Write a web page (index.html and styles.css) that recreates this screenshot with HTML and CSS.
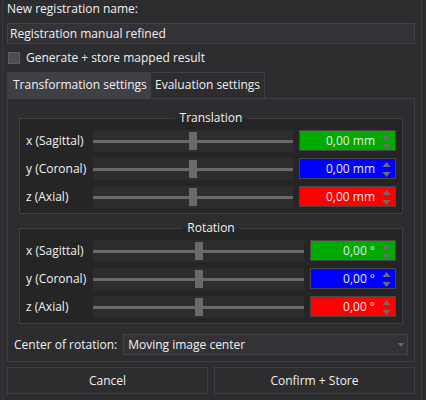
FILE: index.html
```html
<!DOCTYPE html>
<html>
<head>
<meta charset="utf-8">
<link rel="stylesheet" href="styles.css">
</head>
<body>
<div class="window">
  <div class="main">
    <div class="caption">New registration name:</div>
    <div class="lineedit">Registration manual refined</div>
    <div class="check"><span class="box"></span><span>Generate + store mapped result</span></div>
    <div class="tabs">
      <div class="tab active">Transformation settings</div>
      <div class="tab">Evaluation settings</div>
    </div>
    <div class="pane">
      <fieldset class="group trans">
        <legend>Translation</legend>
        <div class="row">
          <span class="lbl">x (Sagittal)</span>
          <div class="slider"><span class="handle"></span></div>
          <div class="spin green"><span class="val">0,00 mm</span><svg class="arrows" width="9" height="16" viewBox="0 0 9 16"><path d="M4.5 1 L8.5 6 L0.5 6 Z M0.5 11 L8.5 11 L4.5 16 Z" fill="#6c6c6c"/></svg></div>
        </div>
        <div class="row">
          <span class="lbl">y (Coronal)</span>
          <div class="slider"><span class="handle"></span></div>
          <div class="spin blue"><span class="val">0,00 mm</span><svg class="arrows" width="9" height="16" viewBox="0 0 9 16"><path d="M4.5 1 L8.5 6 L0.5 6 Z M0.5 11 L8.5 11 L4.5 16 Z" fill="#6c6c6c"/></svg></div>
        </div>
        <div class="row">
          <span class="lbl">z (Axial)</span>
          <div class="slider"><span class="handle"></span></div>
          <div class="spin red"><span class="val">0,00 mm</span><svg class="arrows" width="9" height="16" viewBox="0 0 9 16"><path d="M4.5 1 L8.5 6 L0.5 6 Z M0.5 11 L8.5 11 L4.5 16 Z" fill="#6c6c6c"/></svg></div>
        </div>
      </fieldset>
      <fieldset class="group rot">
        <legend>Rotation</legend>
        <div class="row">
          <span class="lbl">x (Sagittal)</span>
          <div class="slider"><span class="handle"></span></div>
          <div class="spin green"><span class="val">0,00 °</span><svg class="arrows" width="9" height="16" viewBox="0 0 9 16"><path d="M4.5 1 L8.5 6 L0.5 6 Z M0.5 11 L8.5 11 L4.5 16 Z" fill="#6c6c6c"/></svg></div>
        </div>
        <div class="row">
          <span class="lbl">y (Coronal)</span>
          <div class="slider"><span class="handle"></span></div>
          <div class="spin blue"><span class="val">0,00 °</span><svg class="arrows" width="9" height="16" viewBox="0 0 9 16"><path d="M4.5 1 L8.5 6 L0.5 6 Z M0.5 11 L8.5 11 L4.5 16 Z" fill="#6c6c6c"/></svg></div>
        </div>
        <div class="row">
          <span class="lbl">z (Axial)</span>
          <div class="slider"><span class="handle"></span></div>
          <div class="spin red"><span class="val">0,00 °</span><svg class="arrows" width="9" height="16" viewBox="0 0 9 16"><path d="M4.5 1 L8.5 6 L0.5 6 Z M0.5 11 L8.5 11 L4.5 16 Z" fill="#6c6c6c"/></svg></div>
        </div>
      </fieldset>
      <div class="comborow">
        <span class="combolbl">Center of rotation:</span>
        <div class="combo"><span>Moving image center</span><svg width="6" height="4" viewBox="0 0 6 4"><path d="M0 0 L6 0 L3 4 Z" fill="#6a6a6a"/></svg></div>
      </div>
    </div>
    <div class="buttons">
      <div class="btn">Cancel</div>
      <div class="btn">Confirm + Store</div>
    </div>
  </div>
</div>
</body>
</html>
```

FILE: styles.css
```css
html, body {
  margin: 0;
  padding: 0;
  background: #2d2d30;
  width: 426px;
  height: 400px;
  overflow: hidden;
}
body {
  font-family: "Open Sans", "Noto Sans", sans-serif;
  font-size: 12px;
  color: #f1f1f1;
}
.window {
  width: 418px;
  height: 400px;
  margin-left: 2px;
  border-left: 1px solid #38383d;
  border-right: 1px solid #3f3f46;
}
.main {
  width: 408px;
  margin-left: 4px;
  display: flex;
  flex-direction: column;
}
.caption {
  height: 23px;
  line-height: 18px;
  white-space: nowrap;
}
.lineedit {
  height: 21px;
  box-sizing: border-box;
  border: 1px solid #434346;
  background: #333337;
  padding-left: 2px;
  line-height: 19px;
  white-space: nowrap;
}
.check {
  display: flex;
  align-items: center;
  gap: 6px;
  height: 16px;
  margin-top: 6px;
  margin-left: 1px;
  line-height: 16px;
  white-space: nowrap;
}
.box {
  width: 12px;
  height: 12px;
  box-sizing: border-box;
  background: #4d4d50;
  border: 1px solid #5c5c60;
}
.tabs {
  display: flex;
  margin-top: 6px;
  height: 26px;
}
.tab {
  box-sizing: border-box;
  height: 26px;
  line-height: 24px;
  padding: 0 0 0 5px;
  border: 1px solid #3f3f46;
  border-bottom: none;
  white-space: nowrap;
}
.tab.active {
  background: #3f3f46;
  width: 143px;
}
.tab + .tab {
  width: 115px;
  padding-left: 4px;
}
.pane {
  border: 1px solid #3f3f46;
  height: 264px;
  box-sizing: border-box;
  padding: 12px 6px 6px;
  display: flex;
  flex-direction: column;
}
.group {
  margin: 0 5px;
  padding: 5px 6px 5px;
  border: 1px solid #3f3f46;
  background: #252526;
  min-inline-size: 0;
  display: flex;
  flex-direction: column;
  gap: 6px;
}
.group legend {
  margin: 0 auto;
  padding: 0 5px;
  line-height: 14px;
  height: 14px;
}
.rot {
  margin-top: 7px;
}
.row {
  display: grid;
  grid-template-columns: 61px 1fr 97px;
  column-gap: 6px;
  height: 22px;
  align-items: center;
}
.rot .row {
  grid-template-columns: 61px 1fr 86px;
}
.lbl {
  white-space: nowrap;
  line-height: 22px;
}
.slider {
  height: 22px;
  background: linear-gradient(#6a6a6a, #6a6a6a) center / 100% 3px no-repeat, #2d2d30;
  display: flex;
  align-items: center;
  justify-content: center;
}
.handle {
  width: 8px;
  height: 18px;
  background: #6a6a6a;
}
.spin {
  height: 21px;
  box-sizing: border-box;
  border: 1px solid #474747;
  display: flex;
  align-items: center;
  align-self: start;
}
.spin .val {
  flex: 1;
  text-align: right;
  color: #e8e8e8;
  padding-right: 7px;
  white-space: nowrap;
}
.spin .arrows {
  margin-right: 4px;
}
.green { background: #00aa00; }
.blue { background: #0000ff; }
.red { background: #ff0000; }
.comborow {
  display: flex;
  align-items: center;
  gap: 6px;
  margin-top: 10px;
  white-space: nowrap;
}
.combo {
  flex: 1;
  height: 21px;
  box-sizing: border-box;
  border: 1px solid #434346;
  background: #333337;
  display: flex;
  align-items: center;
  justify-content: space-between;
  padding: 0 3px 0 4px;
}
.buttons {
  display: flex;
  gap: 6px;
  margin-top: 5px;
}
.btn {
  flex: 1;
  height: 27px;
  box-sizing: border-box;
  border: 1px solid #3f3f46;
  text-align: center;
  line-height: 25px;
}
```
